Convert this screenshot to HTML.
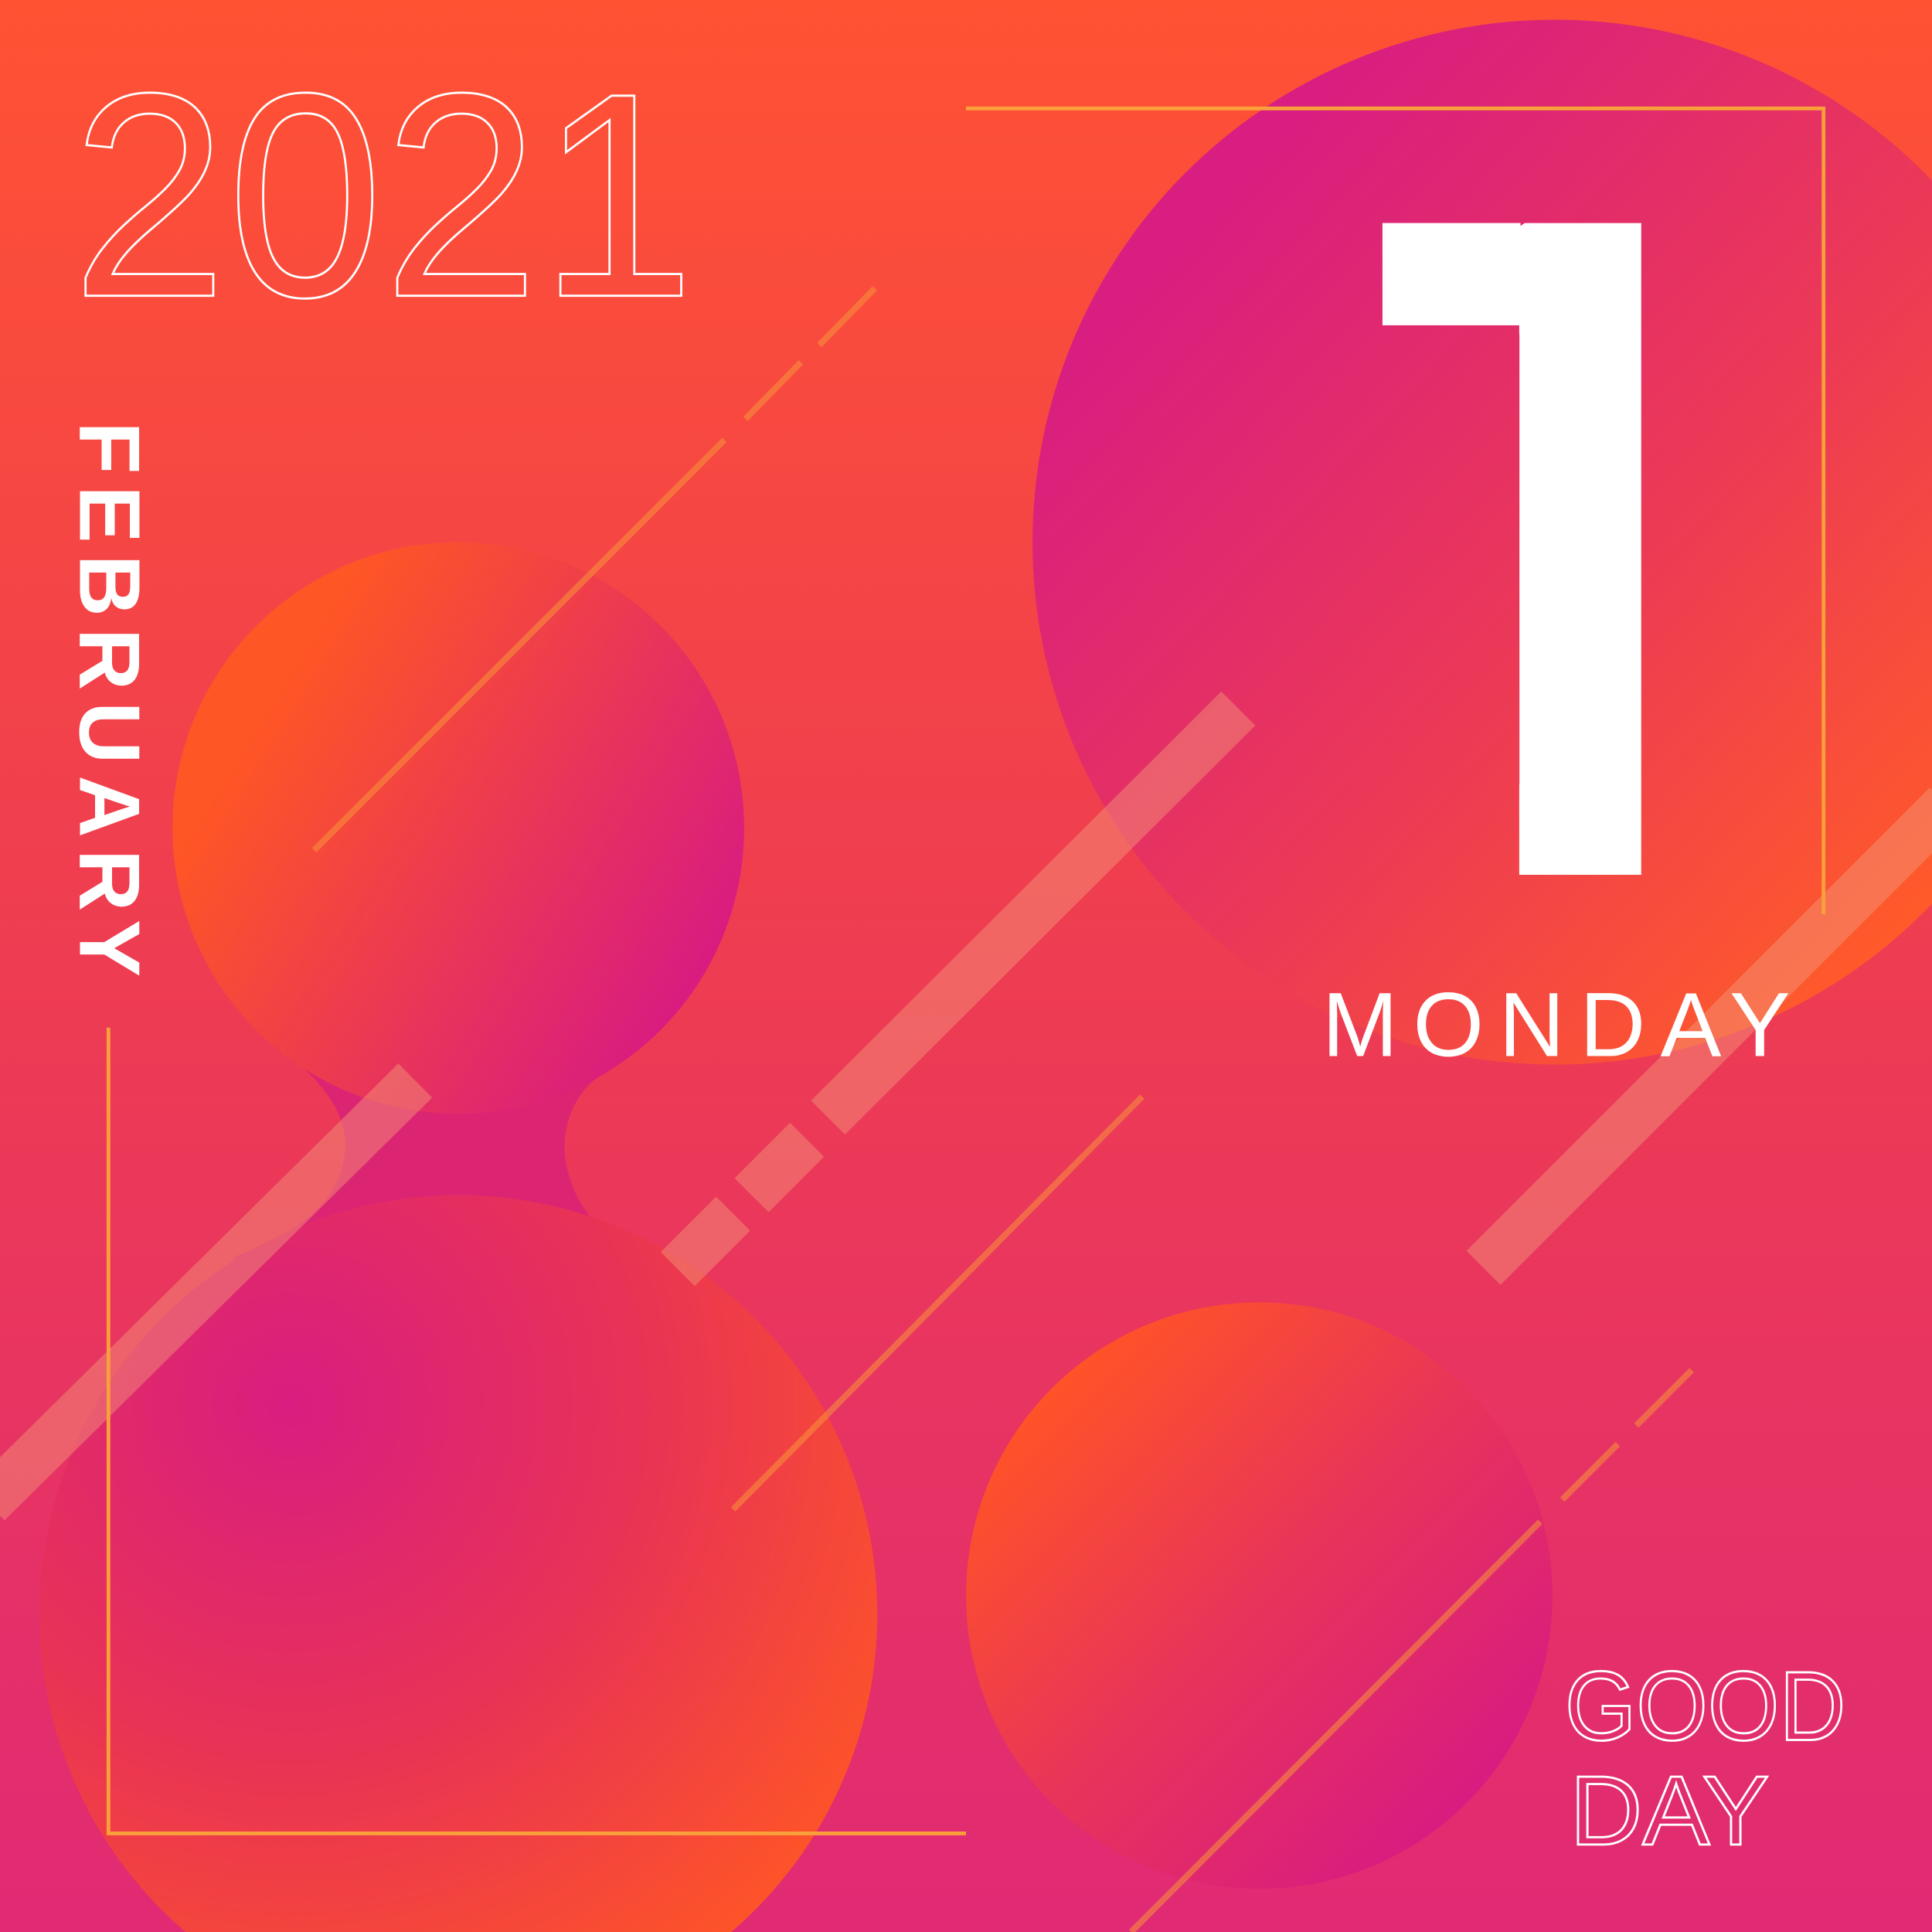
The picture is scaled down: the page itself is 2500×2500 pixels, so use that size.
<!DOCTYPE html>
<html><head><meta charset="utf-8"><style>html,body{margin:0;padding:0;width:2500px;height:2500px;overflow:hidden}svg{display:block}</style></head>
<body>
<svg width="2500" height="2500" viewBox="0 0 1568 1568" xmlns="http://www.w3.org/2000/svg">
<defs>
<linearGradient id="bg" x1="0" y1="0" x2="0" y2="1"><stop offset="0" stop-color="#FF5233"/><stop offset="0.5" stop-color="#EE3C52"/><stop offset="1" stop-color="#E02A74"/></linearGradient>
<linearGradient id="c1" x1="0.15" y1="0.2" x2="0.85" y2="0.85"><stop offset="0" stop-color="#D81E80"/><stop offset="0.55" stop-color="#EC3A55"/><stop offset="1" stop-color="#FF5A2A"/></linearGradient>
<linearGradient id="c2" x1="0.1" y1="0.3" x2="0.9" y2="0.8"><stop offset="0.05" stop-color="#FF5625"/><stop offset="1" stop-color="#D81C80"/></linearGradient>
<radialGradient id="c3" cx="0.3" cy="0.25" r="0.85"><stop offset="0" stop-color="#D81E80"/><stop offset="0.5" stop-color="#E93355"/><stop offset="1" stop-color="#FF5625"/></radialGradient>
<linearGradient id="c4" x1="0.15" y1="0.15" x2="0.85" y2="0.85"><stop offset="0" stop-color="#FF5228"/><stop offset="0.5" stop-color="#E8345A"/><stop offset="1" stop-color="#D81C80"/></linearGradient>
<clipPath id="stem"><rect x="1233" y="181" width="99" height="529"/></clipPath>
</defs>
<rect width="1568" height="1568" fill="url(#bg)"/>
<circle cx="1262" cy="440" r="424" fill="url(#c1)"/>
<path d="M230,830 L215,842 Q285,890 280,935 Q275,990 190,1020 L220,1120 L500,1120 L530,1030 Q460,990 458,930 Q460,885 500,865 L520,820 Z" fill="#DC2572"/>
<circle cx="372" cy="1310" r="340" fill="url(#c3)"/>
<circle cx="372" cy="672" r="232" fill="url(#c2)"/>
<circle cx="1022" cy="1295" r="238" fill="url(#c4)"/>
<g stroke="#F59A7A" stroke-opacity="0.45" stroke-width="39">
<line x1="-10" y1="1220" x2="337" y2="877"/>
<line x1="1005" y1="575" x2="672" y2="907"/>
<line x1="655" y1="925" x2="610" y2="970"/>
<line x1="595" y1="985" x2="550" y2="1030"/>
<line x1="1580" y1="653" x2="1204" y2="1029"/>
</g>
<g stroke="#F7933A" stroke-opacity="0.55" stroke-width="5">
<line x1="255" y1="690" x2="588" y2="357"/>
<line x1="605" y1="340" x2="650" y2="294"/>
<line x1="665" y1="280" x2="710" y2="234"/>
<line x1="595" y1="1225" x2="927" y2="890"/>
<line x1="918" y1="1568" x2="1250" y2="1235"/>
<line x1="1268" y1="1217" x2="1313" y2="1172"/>
<line x1="1328" y1="1157" x2="1373" y2="1112"/>
</g>
<g fill="none" stroke="#F9A03A" stroke-width="3">
<polyline points="784,88 1480,88 1480,742"/>
<polyline points="88,834 88,1488 784,1488"/>
</g>
<text x="58" y="240" font-family="Liberation Sans, sans-serif" font-size="236" fill="none" stroke="#fff" stroke-width="1.8" textLength="506" lengthAdjust="spacingAndGlyphs">2021</text>
<g clip-path="url(#stem)">
<text transform="translate(1233,181) scale(1.547,1.06) translate(-1189,-205)" x="1080" y="710" font-family="Liberation Sans, sans-serif" font-size="735" font-weight="bold" fill="#fff" textLength="260" lengthAdjust="spacingAndGlyphs">1</text>
</g>
<rect x="1122" y="181" width="112" height="83" fill="#fff"/>
<text x="1073" y="857" font-family="Liberation Sans, sans-serif" font-size="74" fill="#fff" textLength="380" lengthAdjust="spacing">MONDAY</text>
<text transform="translate(65,342) rotate(90)" font-family="Liberation Sans, sans-serif" font-size="70" font-weight="bold" fill="#fff" textLength="451" lengthAdjust="spacing">FEBRUARY</text>
<g font-family="Liberation Sans, sans-serif" font-size="80" fill="none" stroke="#fff" stroke-width="1.8">
<text x="1270" y="1412" textLength="228" lengthAdjust="spacingAndGlyphs">GOOD</text>
<text x="1274" y="1497" textLength="162" lengthAdjust="spacingAndGlyphs">DAY</text>
</g>
</svg>
</body></html>
